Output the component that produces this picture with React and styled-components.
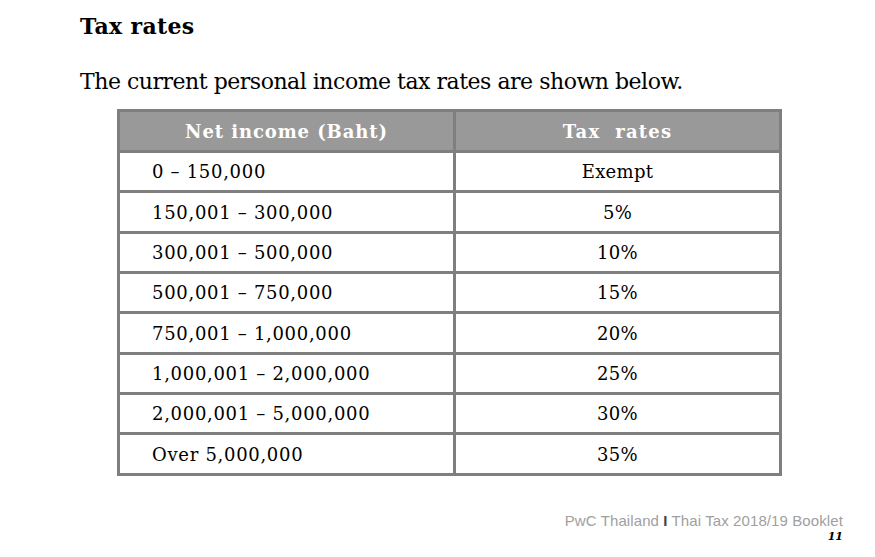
import React from "react";
import styled, { createGlobalStyle } from "styled-components";

const Global = createGlobalStyle`
  html, body { margin: 0; padding: 0; background: #ffffff; }
  body { width: 875px; height: 557px; overflow: hidden; }
`;

const Page = styled.div`
  display: flex;
  flex-direction: column;
  padding: 12px 32px 0 80px;
  font-family: "DejaVu Serif", "Liberation Serif", serif;
  color: #000;
`;

const Title = styled.h1`
  margin: 0;
  font-size: 22px;
  line-height: 28px;
  font-weight: bold;
  letter-spacing: 0.3px;
`;

const Lead = styled.p`
  margin: 27px 0 0 0;
  font-size: 22px;
  line-height: 30px;
  letter-spacing: -0.48px;
`;

const Table = styled.table`
  margin: 12px 0 0 37px;
  width: 665px;
  border-collapse: collapse;
  table-layout: fixed;
  border: 3px solid #7f7f7f;
`;

const Col = styled.col`
  width: ${(p) => p.$w};
`;

const HeadCell = styled.th`
  height: 38px;
  padding: 0;
  background: #999999;
  color: #ffffff;
  font-size: 18px;
  font-weight: bold;
  text-align: center;
  border: 3px solid #7f7f7f;
  white-space: pre;
  letter-spacing: ${(p) => p.$ls}px;
`;

const Cell = styled.td`
  height: 37.35px;
  padding: 0 0 0 ${(p) => (p.$center ? 0 : 32)}px;
  font-size: 18px;
  text-align: ${(p) => (p.$center ? "center" : "left")};
  border: 3px solid #7f7f7f;
  font-variant-numeric: oldstyle-nums;
  letter-spacing: ${(p) => (p.$center ? 0.3 : 0.7)}px;
`;

const Footer = styled.div`
  margin-top: 36px;
  display: flex;
  flex-direction: column;
  align-items: flex-end;
  gap: 1px;
  font-family: "Liberation Sans", Arial, sans-serif;
`;

const Source = styled.div`
  font-size: 15px;
  line-height: 17px;
  color: #a0a0a0;
  letter-spacing: 0.1px;
`;

const Sep = styled.span`
  color: #444;
  font-weight: bold;
`;

const PageNo = styled.div`
  font-size: 11px;
  line-height: 14px;
  font-weight: bold;
  font-style: italic;
  color: #000;
  font-family: "DejaVu Serif", serif;
`;

const rows = [
  ["0 – 150,000", "Exempt"],
  ["150,001 – 300,000", "5%"],
  ["300,001 – 500,000", "10%"],
  ["500,001 – 750,000", "15%"],
  ["750,001 – 1,000,000", "20%"],
  ["1,000,001 – 2,000,000", "25%"],
  ["2,000,001 – 5,000,000", "30%"],
  ["Over 5,000,000", "35%"],
];

export default function App() {
  return (
    <>
      <Global />
      <Page>
        <Title>Tax rates</Title>
        <Lead>The current personal income tax rates are shown below.</Lead>
        <Table>
          <colgroup>
            <Col $w="50.75%" />
            <Col $w="49.25%" />
          </colgroup>
          <thead>
            <tr>
              <HeadCell $ls={0.9}>Net income (Baht)</HeadCell>
              <HeadCell $ls={1.2}>{"Tax  rates"}</HeadCell>
            </tr>
          </thead>
          <tbody>
            {rows.map(([a, b]) => (
              <tr key={a}>
                <Cell>{a}</Cell>
                <Cell $center>{b}</Cell>
              </tr>
            ))}
          </tbody>
        </Table>
        <Footer>
          <Source>
            PwC Thailand <Sep>I</Sep> Thai Tax 2018/19 Booklet
          </Source>
          <PageNo>11</PageNo>
        </Footer>
      </Page>
    </>
  );
}
